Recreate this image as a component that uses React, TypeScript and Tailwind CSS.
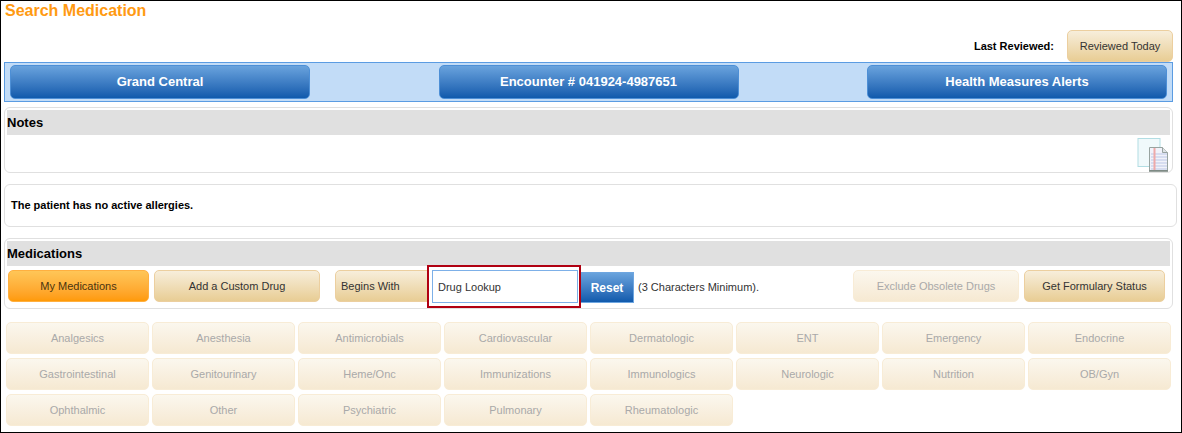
const CATEGORIES = [
  "Analgesics", "Anesthesia", "Antimicrobials", "Cardiovascular", "Dermatologic", "ENT", "Emergency", "Endocrine",
  "Gastrointestinal", "Genitourinary", "Heme/Onc", "Immunizations", "Immunologics", "Neurologic", "Nutrition", "OB/Gyn",
  "Ophthalmic", "Other", "Psychiatric", "Pulmonary", "Rheumatologic",
];

const tan = "h-[32px] rounded-[5px] border border-[#eccf9f] bg-gradient-to-b from-[#f7eedb] to-[#e8cd94] text-[11px] text-[#333]";
const faded = "h-[32px] rounded-[5px] border border-[#f8ecd6] bg-gradient-to-b from-[#fbf7ee] to-[#f6e9d2] text-[11px] text-[#a9a9a9]";
const blue = "h-[34px] w-[300px] rounded-[5px] border border-[#4d8fd6] bg-gradient-to-b from-[#69a3dd] to-[#0f5aac] text-[13px] font-bold text-white";

function NotesIcon() {
  return (
    <svg width="32" height="34" viewBox="0 0 32 34">
      <rect x="1" y="0.5" width="22" height="28" fill="#f0f9fb" stroke="#b2dde3" />
      <path d="M12.5 9.5h13l5 5v18h-18z" fill="#f1f2fa" stroke="#98a3a0" />
      <path d="M25.5 9.5v5h5" fill="#dfe3e6" stroke="#98a3a0" />
      <path d="M14 16h16M14 19h16M14 22h16M14 25h16M14 28h16M14 31h16" stroke="#bcc7e6" />
      <path d="M17.5 10v22" stroke="#efa9a9" strokeWidth="2" />
      <path d="M12 33h19" stroke="#76837d" strokeWidth="1.5" />
    </svg>
  );
}

export default function App() {
  return (
    <div className="relative flex h-[433px] w-[1182px] flex-col overflow-hidden border border-black bg-white pl-[3px] font-['Liberation_Sans',Arial,sans-serif]">
      <h1 className="ml-[1px] h-[19px] text-[16px] font-bold leading-[19px] text-[#ff9a12]">Search Medication</h1>

      {/* last reviewed */}
      <div className="mt-[10px] flex h-[32px] w-[1169px] items-center justify-end">
        <span className="mr-[13px] text-[11px] font-bold text-black">Last Reviewed:</span>
        <button className={`${tan} w-[106px]`}>Reviewed Today</button>
      </div>

      {/* quick links */}
      <div className="flex h-[40px] w-[1169px] items-center justify-between border border-[#5b9ce2] bg-[#c2dcf7] px-[5px]">
        <button className={blue}>Grand Central</button>
        <button className={blue}>Encounter # 041924-4987651</button>
        <button className={blue}>Health Measures Alerts</button>
      </div>

      {/* notes */}
      <section className="mt-[5px] h-[66px] w-[1169px] rounded-[6px] border border-[#e0e0e0] p-[2px]">
        <h2 className="h-[25px] bg-[#e0e0e0] text-[13px] font-bold leading-[25px] text-black">Notes</h2>
        <div className="mr-[1px] mt-[3px] flex justify-end">
          <NotesIcon />
        </div>
      </section>

      {/* allergies */}
      <section className="mt-[11px] flex h-[43px] w-[1173px] items-center rounded-[6px] border border-[#e0e0e0] pl-[6px] text-[11px] font-bold text-black">
        The patient has no active allergies.
      </section>

      {/* medications */}
      <section className="mt-[11px] h-[71px] w-[1169px] rounded-[6px] border border-[#e0e0e0] p-[2px]">
        <h2 className="h-[25px] bg-[#e0e0e0] text-[13px] font-bold leading-[25px] text-black">Medications</h2>
        <div className="ml-[1px] mt-[4px] flex items-start">
          <button className="h-[32px] w-[141px] rounded-[5px] border border-[#ffb040] bg-gradient-to-b from-[#ffc657] to-[#ff9a05] text-[11px] text-[#4a3410]">My Medications</button>
          <button className={`${tan} ml-[5px] w-[166px]`}>Add a Custom Drug</button>
          <button className={`${tan} ml-[15px] w-[93px] rounded-r-none pl-[5px] text-left`}>Begins With</button>
          <input
            readOnly
            value="Drug Lookup"
            className="ml-[4px] h-[33px] w-[146px] border border-[#7db0e8] bg-white pl-[5px] text-[11px] text-[#333] outline-none"
          />
          <button className="ml-[2px] mt-[2px] h-[31px] w-[54px] border border-[#6ea6e0] bg-gradient-to-b from-[#69a3dd] to-[#0f5aac] text-[12px] font-bold text-white">Reset</button>
          <span className="ml-[4px] mt-[9px] w-[215px] text-[11px] text-[#333]">(3 Characters Minimum).</span>
          <button className={`${faded} w-[166px]`}>Exclude Obsolete Drugs</button>
          <button className={`${tan} ml-[5px] w-[141px] text-[#222]`}>Get Formulary Status</button>
        </div>
      </section>

      {/* category grid */}
      <div className="ml-[2px] mt-[13px] grid w-[1165px] grid-cols-[repeat(8,143px)] gap-x-[3px] gap-y-[4px]">
        {CATEGORIES.map((c) => (
          <button key={c} className={faded}>{c}</button>
        ))}
      </div>

      {/* red annotation round the lookup field */}
      <div className="pointer-events-none absolute left-[426px] top-[264px] h-[43px] w-[154px] border-2 border-[#b00012]" />
    </div>
  );
}
